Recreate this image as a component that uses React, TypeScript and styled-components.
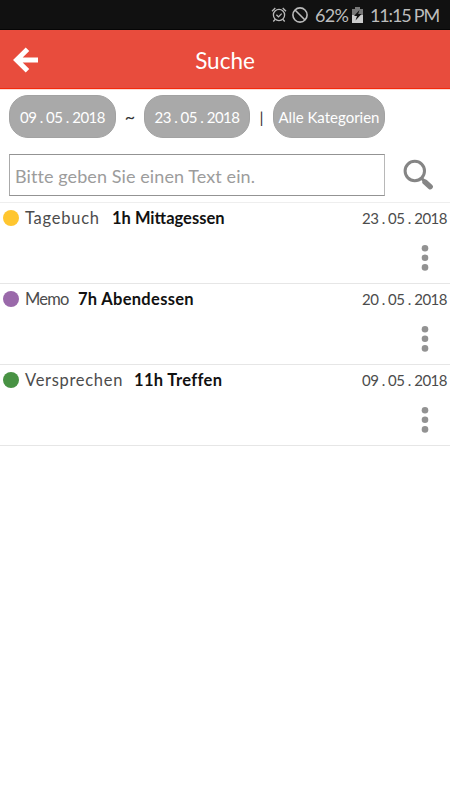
import React from 'react';
import styled, { createGlobalStyle } from 'styled-components';

const GlobalStyle = createGlobalStyle`
  * { box-sizing: border-box; }
  body { margin: 0; background: #fff; font-family: Lato, sans-serif; }
`;

const Screen = styled.main`
  width: 450px;
  height: 800px;
  background: #fff;
  overflow: hidden;
  white-space: nowrap;
`;

const StatusBar = styled.div`
  height: 30px;
  background: #111;
  border-bottom: 1px solid #060606;
  display: flex;
  align-items: center;
  padding-left: 271px;
`;

const Text = styled.span<{ $size: number; $color: string; $weight?: number; $track?: number }>`
  font-size: ${p => p.$size}px;
  line-height: 20px;
  color: ${p => p.$color};
  font-weight: ${p => p.$weight ?? 400};
  letter-spacing: ${p => p.$track ?? 0}px;
`;

const BatteryLevel = styled(Text)`
  width: 37px;
  margin-left: 6px;
`;

const Clock = styled(Text)`
  margin-left: 7px;
`;

const Header = styled.header`
  height: 59px;
  background: #e84c3d;
  border-bottom: 1px solid #f42a0c;
  display: grid;
  grid-template-columns: 50px 1fr 50px;
  align-items: center;
`;

const IconButton = styled.button`
  border: 0;
  padding: 0;
  background: none;
  display: flex;
`;

const BackButton = styled(IconButton)`
  padding: 1px 0 0 12px;
`;

const Title = styled.h1`
  margin: 3px 0 0;
  text-align: center;
  color: #fff;
  font-size: 22.5px;
  line-height: 26px;
  font-weight: 400;
`;

const Filters = styled.div`
  height: 65px;
  padding: 5px 9px 0;
  border-top: 1px solid #fbd9d4;
  display: flex;
  align-items: flex-start;
`;

const Pill = styled.button<{ $width: number }>`
  width: ${p => p.$width}px;
  height: 43px;
  padding: 1px 0 0;
  border: 1px solid #a2a2a2;
  border-radius: 19px;
  background: #a9a9a9;
  font-family: inherit;
  display: flex;
  align-items: center;
  justify-content: center;
`;

const Separator = styled.span<{ $width: number }>`
  width: ${p => p.$width}px;
  line-height: 43px;
  text-align: center;
  font-size: 16px;
  color: #333;
`;

const Tilde = styled(Separator)`
  font-size: 18px;
`;

const SearchRow = styled.div`
  height: 49px;
  padding-left: 9px;
  display: flex;
  border-bottom: 1px solid #eee;
`;

const SearchInput = styled.input`
  width: 376px;
  height: 42px;
  border: 1px solid #939393;
  border-left-color: #aaa;
  border-right-color: #b8b8b8;
  background: #fff;
  padding: 2px 5px 0;
  font: 400 18px Lato, sans-serif;
  letter-spacing: 0.09px;
  &::placeholder { color: #9c9c9c; opacity: 1; }
`;

const SearchButton = styled(IconButton)`
  margin-left: 16px;
  padding-top: 4px;
`;

const Entry = styled.article`
  height: 81px;
  border-bottom: 1px solid #e6e6e6;
`;

const EntryHeading = styled.div`
  height: 30px;
  padding: 0 3px;
  display: flex;
  align-items: center;
`;

const Dot = styled.i<{ $color: string }>`
  width: 16px;
  height: 16px;
  border-radius: 50%;
  background: ${p => p.$color};
  margin-right: 6px;
`;

const Category = styled(Text)<{ $width: number }>`
  width: ${p => p.$width}px;
`;

const EntryDate = styled(Text)`
  margin-left: auto;
`;

const MenuButton = styled(IconButton)`
  margin: 10px 20px 0 auto;
`;

const AlarmIcon = () => (
  <svg width="16" height="18" viewBox="0 0 16 18" fill="none" stroke="#bababa" strokeWidth="1.3">
    <circle cx="8" cy="9" r="5.6" />
    <path d="M1 5.2 4.3 2M15 5.2 11.7 2M4 13.5 2.3 15.5M12 13.5l1.7 2M5.4 8.8l2.1 2.1 3.2-3.3" />
  </svg>
);

const BlockedIcon = () => (
  <svg width="18" height="18" viewBox="0 0 18 18" fill="none" stroke="#bababa" strokeWidth="1.6">
    <circle cx="9" cy="9" r="7.1" />
    <path d="m4 4 10 10" />
  </svg>
);

const BatteryIcon = () => (
  <svg width="11" height="16" viewBox="0 0 11 16">
    <path fill="#777" d="M3 0h5v2h3v8H0V2h3z" />
    <path fill="#ccc" d="M0 8h11v8H0z" />
    <path fill="#111" d="M7.5 3 2 9h3l-1.5 4.5L9.5 7H6.2z" />
  </svg>
);

const BackIcon = () => (
  <svg width="27" height="28" viewBox="0 0 27 28" fill="none" stroke="#fff" strokeWidth="5">
    <path d="M15.5 3.2 4.6 14l10.9 10.8M5 14h21" />
  </svg>
);

const SearchIcon = () => (
  <svg width="34" height="34" viewBox="0 0 34 34" fill="none" stroke="#858585">
    <circle cx="13.8" cy="13" r="9.7" strokeWidth="3" />
    <path d="m20.3 20 3.4 3.4" strokeWidth="3" />
    <path d="m24 24 5.2 4.7" strokeWidth="5.4" strokeLinecap="round" />
  </svg>
);

const MoreIcon = () => (
  <svg width="10" height="30" viewBox="0 0 10 30" fill="#929292">
    <circle cx="5" cy="5.2" r="3.3" />
    <circle cx="5" cy="14.8" r="3.3" />
    <circle cx="5" cy="24.4" r="3.3" />
  </svg>
);

const entries = [
  { color: '#ffc62f', category: 'Tagebuch', width: 87, track: 0.75, title: '1h Mittagessen', titleTrack: 0, date: '23 . 05 . 2018' },
  { color: '#9a69aa', category: 'Memo', width: 53, track: -0.75, title: '7h Abendessen', titleTrack: 0.3, date: '20 . 05 . 2018' },
  { color: '#489244', category: 'Versprechen', width: 109, track: 0.7, title: '11h Treffen', titleTrack: 0.35, date: '09 . 05 . 2018' },
];

export default function App() {
  return (
    <Screen>
      <GlobalStyle />
      <StatusBar>
        <AlarmIcon />
        <span>&nbsp;</span>
        <BlockedIcon />
        <BatteryLevel $size={18} $color="#bdbdbd" $track={-0.8}>62%</BatteryLevel>
        <BatteryIcon />
        <Clock $size={18} $color="#bdbdbd" $track={-1.2}>11:15 PM</Clock>
      </StatusBar>
      <Header>
        <BackButton aria-label="Zurück"><BackIcon /></BackButton>
        <Title>Suche</Title>
      </Header>
      <Filters>
        <Pill $width={107}><Text $size={15} $color="#fff" $track={-0.5}>09 . 05 . 2018</Text></Pill>
        <Tilde $width={28}>~</Tilde>
        <Pill $width={106}><Text $size={15} $color="#fff" $track={-0.5}>23 . 05 . 2018</Text></Pill>
        <Separator $width={23}>|</Separator>
        <Pill $width={112}><Text $size={15} $color="#fff">Alle Kategorien</Text></Pill>
      </Filters>
      <SearchRow>
        <SearchInput placeholder="Bitte geben Sie einen Text ein." />
        <SearchButton aria-label="Suchen"><SearchIcon /></SearchButton>
      </SearchRow>
      {entries.map(e => (
        <Entry key={e.category}>
          <EntryHeading>
            <Dot $color={e.color} />
            <Category $size={16.5} $color="#4c4c4c" $width={e.width} $track={e.track}>{e.category}</Category>
            <Text $size={16.5} $color="#111" $weight={700} $track={e.titleTrack}>{e.title}</Text>
            <EntryDate $size={15} $color="#4c4c4c" $track={-0.5}>{e.date}</EntryDate>
          </EntryHeading>
          <MenuButton aria-label="Mehr"><MoreIcon /></MenuButton>
        </Entry>
      ))}
    </Screen>
  );
}
